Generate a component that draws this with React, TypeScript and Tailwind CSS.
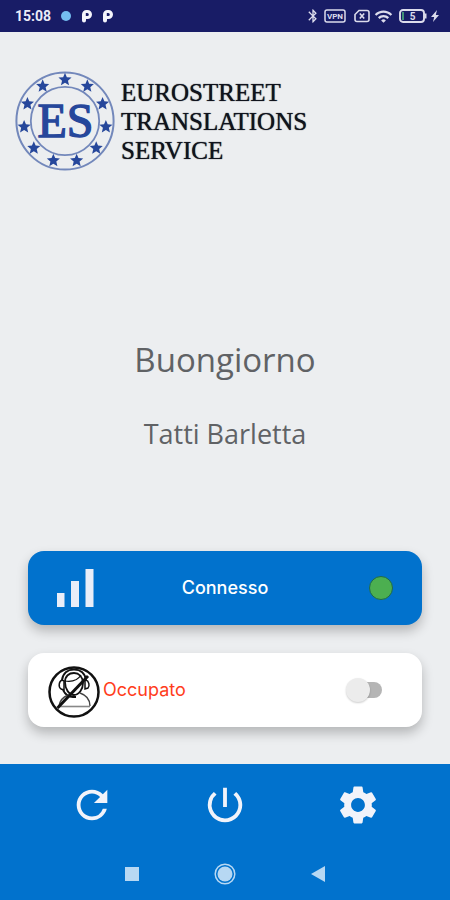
import { useState } from "react";
import { MdBluetooth, MdPowerSettingsNew, MdRefresh, MdSettings, MdWifi } from "react-icons/md";

const STAR_COUNT = 11;

function starPoints(cx: number, cy: number, r: number) {
  return Array.from({ length: 10 }, (_, i) => {
    const radius = i % 2 === 0 ? r : r * 0.45;
    const a = (Math.PI * i) / 5 - Math.PI / 2;
    return `${(cx + radius * Math.cos(a)).toFixed(2)},${(cy + radius * Math.sin(a)).toFixed(2)}`;
  }).join(" ");
}

function Emblem() {
  return (
    <svg viewBox="0 0 100 100" className="size-[100px] shrink-0" role="img" aria-label="ES">
      <g fill="none" stroke="#7388bb">
        <circle cx="50" cy="50" r="48.600" strokeWidth="2" />
        <circle cx="50" cy="50" r="34.200" strokeWidth="1.800" />
      </g>
      {Array.from({ length: STAR_COUNT }, (_, i) => {
        const a = (2 * Math.PI * i) / STAR_COUNT - Math.PI / 2;
        return (
          <polygon
            key={i}
            points={starPoints(50 + 41.3 * Math.cos(a), 50 + 41.3 * Math.sin(a), 6.9)}
            fill="#26479b"
          />
        );
      })}
      <text
        x="50.500"
        y="66"
        textAnchor="middle"
        fontSize="48"
        fill="#26479b"
        stroke="#26479b"
        strokeWidth="1.400"
        className="font-['Liberation_Serif',serif]"
      >
        ES
      </text>
    </svg>
  );
}

function NotificationMark() {
  return (
    <svg viewBox="0 0 12 14" className="h-3.5 w-3" aria-hidden="true">
      <path
        fillRule="evenodd"
        d="M1 5.500A4.500 4.500 0 0 1 5.500 1H6.500a4.500 4.500 0 0 1 0 9H5v1.500a2 2 0 0 1-4 0ZM4.800 4v3H6.300a1.500 1.500 0 0 0 0-3Z"
        fill="#f4f4fb"
      />
    </svg>
  );
}

function StatusBar() {
  return (
    <header className="flex h-8 items-center justify-between bg-[#181c66] pr-2.5 pl-[15px] text-[#dcdcec]">
      <div className="flex items-center">
        <span className="font-[Roboto,sans-serif] text-sm font-bold text-[#ececf8]">15:08</span>
        <span className="ml-2.5 size-2.5 rounded-full bg-[#74bdf0]" />
        <span className="ml-2.5 flex gap-[9px]">
          <NotificationMark />
          <NotificationMark />
        </span>
      </div>
      <div className="flex items-center">
        <MdBluetooth className="size-4" stroke="currentColor" />
        <svg viewBox="0 0 22 14" className="ml-[3px] h-3.5 w-[22px]" aria-label="VPN" role="img">
          <rect x="1" y="1" width="20" height="12" rx="2" fill="none" stroke="currentColor" strokeWidth="1.500" />
          <text x="11" y="10" textAnchor="middle" fontSize="8" fill="currentColor" className="font-[Roboto,sans-serif] font-bold">
            VPN
          </text>
        </svg>
        <svg viewBox="0 0 16 14" className="ml-2 h-3.5 w-4" aria-hidden="true">
          <path d="M5 1.500H13a2 2 0 0 1 2 2v7a2 2 0 0 1-2 2H3a2 2 0 0 1-2-2V5.500Z" fill="none" stroke="currentColor" strokeWidth="1.600" />
          <path d="m5.800 4.500 4.400 5m0-5-4.400 5" fill="none" stroke="currentColor" strokeWidth="1.600" />
        </svg>
        <MdWifi className="ml-1 size-[19px]" />
        <svg viewBox="0 0 28 14" className="ml-1.5 h-3.5 w-7" aria-label="5" role="img">
          <rect x="1" y="1" width="24" height="12" rx="3" fill="none" stroke="currentColor" strokeWidth="1.900" />
          <rect x="3" y="3" width="2" height="8" fill="#3f9277" />
          <path d="M26.500 4.500v5" stroke="currentColor" strokeWidth="2" />
          <text x="13.500" y="10.500" textAnchor="middle" fontSize="10" fill="currentColor" className="font-[Roboto,sans-serif] font-bold">
            5
          </text>
        </svg>
        <svg viewBox="0 0 10 14" className="ml-[3px] h-3.5 w-2.5" aria-hidden="true">
          <path d="M7 1 1 8h3.200L3 13l6-7H5.800Z" fill="currentColor" />
        </svg>
      </div>
    </header>
  );
}

function SignalBars() {
  return (
    <svg viewBox="0 0 38 40" className="h-10 w-[38px]" aria-hidden="true">
      <path d="M1 25h7.500v14H1zM15 13h8v26h-8zM29.500 1h8v38h-8z" fill="#e9edf8" />
    </svg>
  );
}

function BusyOperator() {
  return (
    <svg viewBox="0 0 52 56" className="h-14 w-[52px]" fill="none" stroke="#111" aria-hidden="true">
      <g transform="translate(0 4)">
        <circle cx="26" cy="26" r="24.500" strokeWidth="2.500" />
        <path d="M14 14C15 7 20 3.500 26 3.500S37 7 38 14" strokeWidth="2" />
        <path d="M17 16C17 10 21 7 26 7s9 4 9 10-4 12-9 12-9-6-9-13Z" strokeWidth="1.800" />
        <path d="M17 15c7 1 13-1 16-6" strokeWidth="1.200" />
        <path d="M14 14c-3 1-4 7-1 9l3 1v-9ZM38 14c3 1 4 6 2 8l-3 1v-8Z" strokeWidth="1.500" />
        <path d="M15 24c2 4 5 7 10 7h3" strokeWidth="1.800" />
        <path d="M11 40c1-6 4-9 9-11M32 27c6 2 10 6 10 13" stroke="#444" strokeWidth="1.400" />
        <path d="M10 40.500h32" stroke="#888" strokeWidth="1.600" />
        <path d="M9.500 42 40 10" strokeWidth="3" />
      </g>
    </svg>
  );
}

export default function App() {
  const [busy, setBusy] = useState(false);

  return (
    <div className="flex min-h-screen flex-col bg-[#eceef0] font-[Inter,sans-serif]">
      <StatusBar />

      <main className="flex flex-1 flex-col px-7 pt-[39px] pb-[37px]">
        <div className="-ml-[13px] flex items-center gap-[6px]">
          <Emblem />
          <p className="font-['Liberation_Serif',serif] text-[25px] leading-[29px] text-[#10131c] [text-shadow:0_0_1px_#10131c]">
            EUROSTREET
            <br />
            TRANSLATIONS
            <br />
            SERVICE
          </p>
        </div>

        <div className="flex flex-1 flex-col items-center justify-center gap-9 pt-[70px] text-center font-['Open_Sans',sans-serif] text-[#606265]">
          <h1 className="text-[33px] leading-10">Buongiorno</h1>
          <p className="text-[27px] leading-9">Tatti Barletta</p>
        </div>

        <div className="flex flex-col gap-7">
          <section className="grid h-[74px] grid-cols-[1fr_auto_1fr] items-center rounded-2xl bg-[#0172cd] px-7 shadow-[0_6px_12px_rgba(0,0,0,0.24)]">
            <SignalBars />
            <span className="text-lg font-medium text-white">Connesso</span>
            <span className="mr-px size-6 justify-self-end rounded-full border border-[#1f6a4a] bg-[#4caf50]" />
          </section>

          <section className="flex h-[74px] items-center justify-between rounded-2xl bg-white pr-10 pl-5 shadow-[0_6px_12px_rgba(0,0,0,0.24)]">
            <label htmlFor="busy" className="flex items-center gap-[3px] text-lg text-[#ff3d1c]">
              <BusyOperator />
              Occupato
            </label>
            <input
              id="busy"
              type="checkbox"
              role="switch"
              checked={busy}
              onChange={(e) => setBusy(e.target.checked)}
              className="relative h-4 w-8 appearance-none rounded-full bg-[#b5b5b5] before:absolute before:-top-1 before:-left-1 before:size-6 before:rounded-full before:bg-[#ececec] before:shadow-[0_1px_2px_rgba(0,0,0,0.2)] checked:bg-[#8fc0ea] checked:before:left-3.5 checked:before:bg-[#0172cd]"
            />
          </section>
        </div>
      </main>

      <footer className="h-[136px] bg-[#0172cd]">
        <nav className="grid grid-cols-3 justify-items-center px-[25px] pt-[18px] text-[#f1f3fa]">
          <button type="button" aria-label="Aggiorna">
            <MdRefresh className="size-[46px]" />
          </button>
          <button type="button" aria-label="Esci">
            <MdPowerSettingsNew className="size-[46px]" />
          </button>
          <button type="button" aria-label="Impostazioni">
            <MdSettings className="size-[46px]" />
          </button>
        </nav>
        <div className="mt-[34px] grid grid-cols-3 items-center justify-items-center px-[86px] text-[#b7d8f3]">
          <button type="button" aria-label="App recenti">
            <span className="block size-3.5 bg-current" />
          </button>
          <button type="button" aria-label="Home">
            <svg viewBox="0 0 24 24" className="size-6">
              <circle cx="12" cy="12" r="9.800" fill="none" stroke="currentColor" strokeWidth="1.500" />
              <circle cx="12" cy="12" r="7.500" fill="currentColor" />
            </svg>
          </button>
          <button type="button" aria-label="Indietro">
            <svg viewBox="0 0 16 16" className="size-4">
              <path d="M15 0v16L1 8Z" fill="currentColor" />
            </svg>
          </button>
        </div>
      </footer>
    </div>
  );
}
